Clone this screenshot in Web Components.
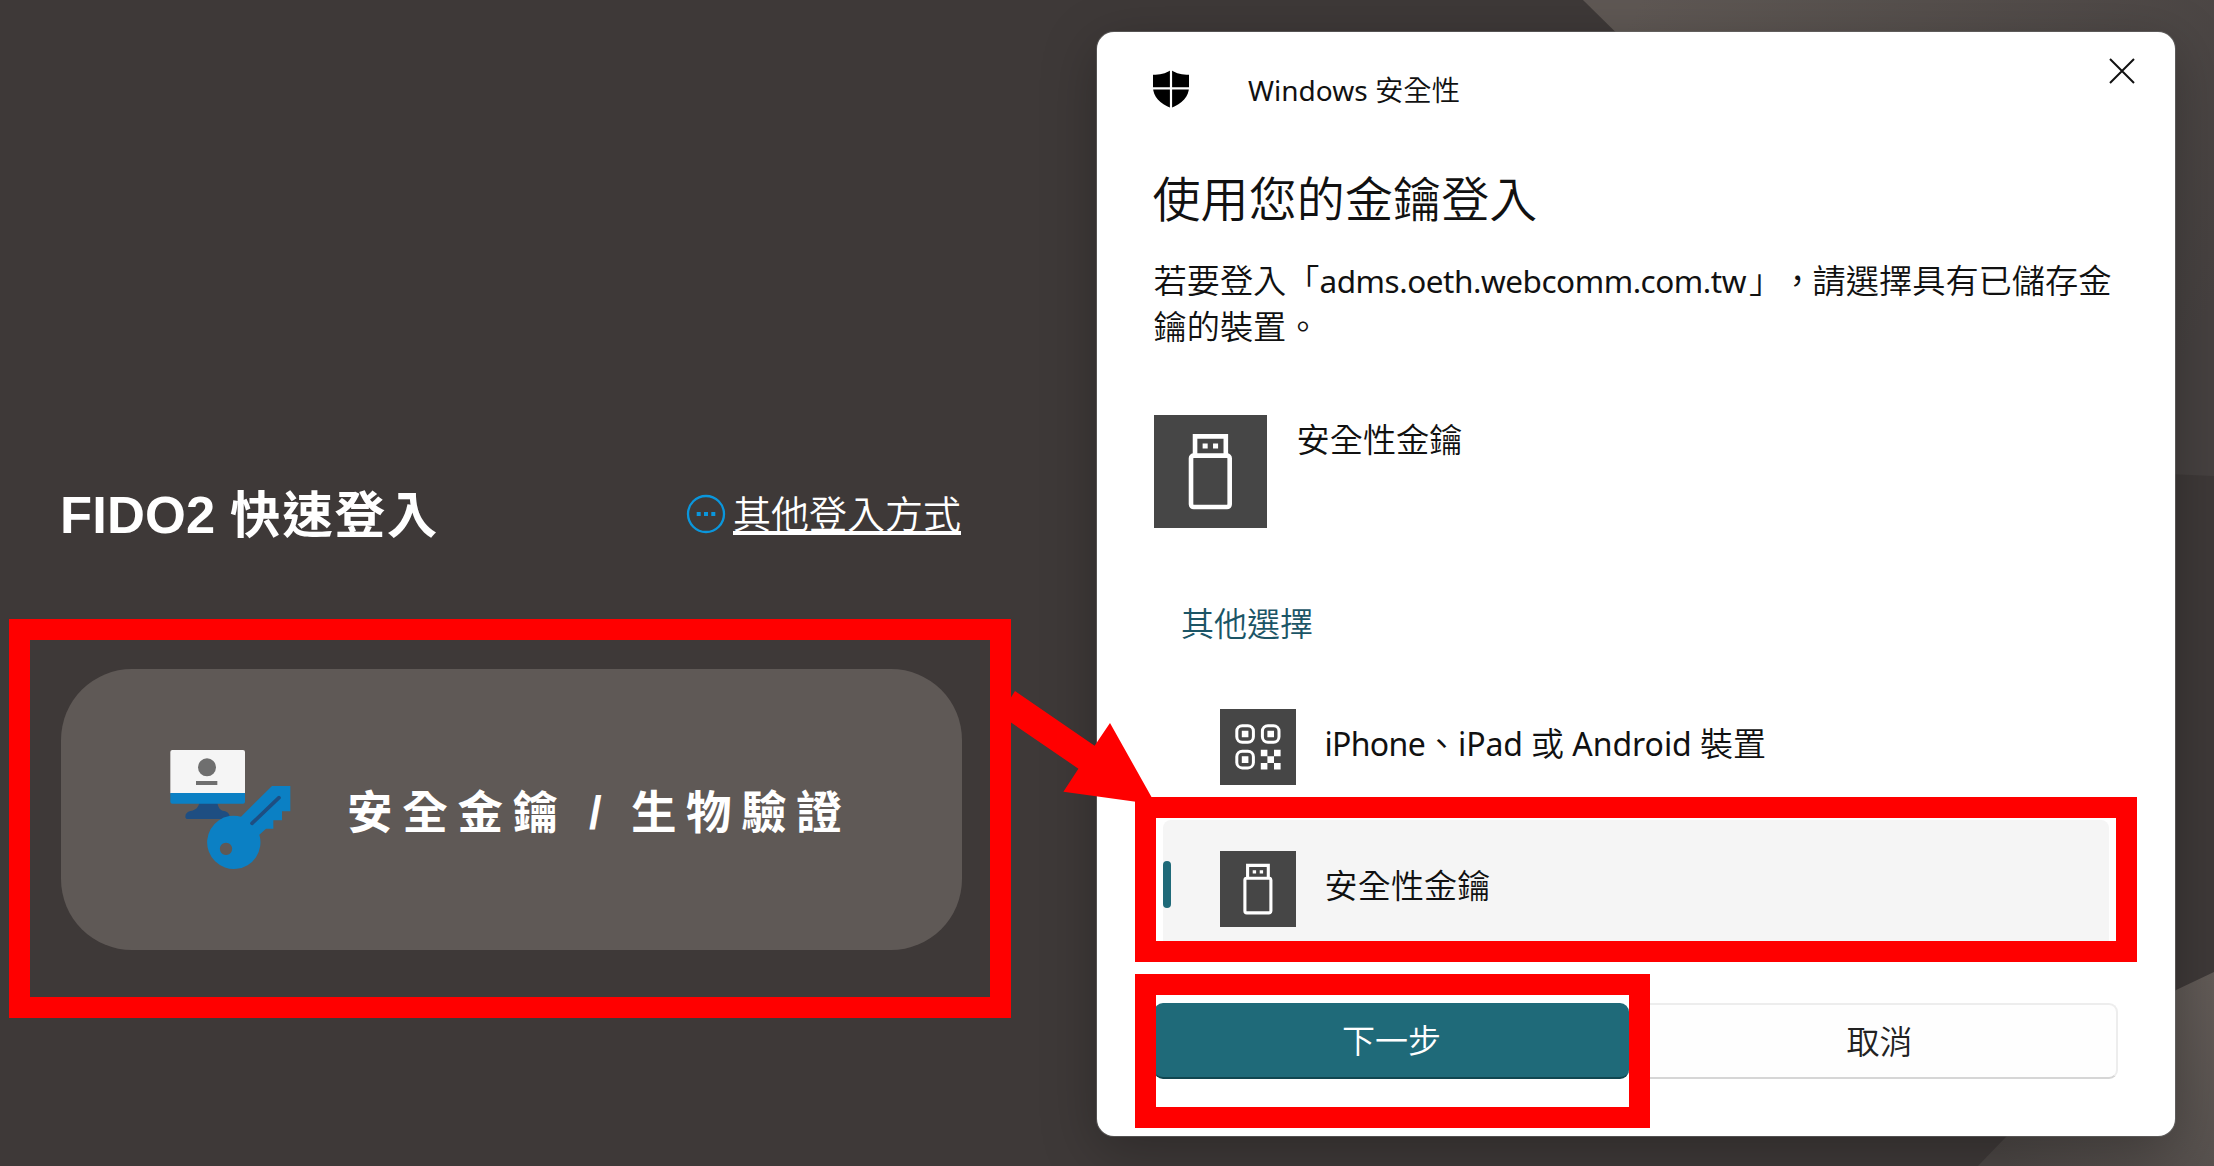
<!DOCTYPE html>
<html lang="zh-Hant">
<head>
<meta charset="utf-8">
<title>FIDO2 快速登入</title>
<style>
html,body{margin:0;padding:0;overflow:hidden}
body{font-family:"Noto Sans CJK TC","Noto Sans",sans-serif;text-spacing-trim:space-all}
</style>
</head>
<body>
<login-page></login-page>
<script>
const define=(name,html,setup)=>customElements.define(name,class extends HTMLElement{
  constructor(){super();this.attachShadow({mode:'open'}).innerHTML=html;}
  connectedCallback(){if(setup)setup(this);}
});

/* A run of text whose tracking is adjusted so that it spans the width in "w". */
define('fit-text',`<style>:host{display:inline-block;line-height:1;white-space:pre;vertical-align:baseline}
:host([latin]){font-family:"Noto Sans",sans-serif;font-weight:400}
:host([arial]){font-family:"Liberation Sans",sans-serif}
</style><slot></slot>`,el=>{
  const w=parseFloat(el.getAttribute('w'));
  const size=el.getAttribute('size');
  if(size)el.style.fontSize=size+'px';
  if(w){
    const r=document.createRange();r.selectNodeContents(el);
    el.style.letterSpacing=((w-r.getBoundingClientRect().width)/el.textContent.length)+'px';
  }
});

define('text-line',`<style>:host{display:flex;align-items:baseline;white-space:pre}</style><slot></slot>`);

define('usb-icon',`<style>:host{display:block}svg{display:block;width:100%;height:100%}</style>
<svg viewBox="0 0 76 76"><rect width="76" height="76" fill="#464646"/>
<g fill="none" stroke="#fff" stroke-width="3.1"><path d="M27.6 27V14.4H48.3V27"/><rect x="24.9" y="27.3" width="26" height="34.6" rx="1.8"/></g>
<path fill="#fff" d="M32.7 19.2h3.4v3.4h-3.4zM39.7 19.2h3.4v3.4h-3.4z"/></svg>`);

define('qr-icon',`<style>:host{display:block}svg{display:block;width:100%;height:100%}</style>
<svg viewBox="0 0 76 76"><rect width="76" height="76" fill="#464646"/>
<g fill="none" stroke="#fff" stroke-width="3"><rect x="16.8" y="16.7" width="16.6" height="16.6" rx="5.5"/><rect x="42.4" y="16.7" width="16.6" height="16.6" rx="5.5"/><rect x="16.8" y="42.3" width="16.6" height="16.6" rx="5.5"/></g>
<path fill="#fff" d="M21.8 21.7h6.6v6.6h-6.6zM47.4 21.7h6.6v6.6h-6.6zM21.8 47.3h6.6v6.6h-6.6zM40.8 40.7h6.6v6.6h-6.6zM54 40.7h6.6v6.6H54zM47.4 47.3H54v6.6h-6.6zM40.8 53.9h6.6v6.6h-6.6zM54 53.9h6.6v6.6H54z"/></svg>`);

define('shield-icon',`<style>:host{display:block;width:36px;height:38px}svg{display:block}</style>
<svg width="36" height="38" viewBox="0 0 36 38"><path d="M18 0C12.500 3.800 6.500 4.600 0 4.800V17C0 26.500 7 34 18 38 29 34 36 26.500 36 17V4.800C29.500 4.600 23.500 3.800 18 0Z"/><path d="M18 0V38M0 18.300H36" stroke="#fff" stroke-width="2.200"/></svg>`);

define('device-key-icon',`<style>:host{display:block;width:124px;height:124px}svg{display:block}</style>
<svg width="124" height="124" viewBox="0 0 372 372">
<path fill="#1e4e82" d="M88 158h54c3 16 9 23 20 25 10 2 17 8 17 17 0 4-3 7-7 7H54c-5 0-8-3-8-7 0-9 6-15 15-17 16-3 24-10 27-25Z"/>
<path fill="#f5f5f5" d="M6 0H219q6 0 6 6V130H1V6Q1 0 7 0Z"/>
<path fill="#0b80c4" d="M1 129H225V155q0 6-6 6H7q-6 0-6-6Z"/>
<circle cx="111" cy="52" r="27" fill="#6f6f6f"/><path d="M78 99H142" stroke="#6f6f6f" stroke-width="12"/>
<path fill="#0b80c4" fill-rule="evenodd" d="M213 200 306 108H361V184H336V211H310V236H288L268 254A80 80 0 1 1 213 200ZM168 278a18.500 18.500 0 1 0 .1 0Z"/>
<path d="M246 220 327 143" stroke="#1e4e82" stroke-width="11" stroke-linecap="round"/></svg>`);

define('more-icon',`<style>:host{display:block;width:40px;height:40px}svg{display:block}</style>
<svg width="40" height="40" viewBox="0 0 40 40"><circle cx="20" cy="20" r="18" fill="none" stroke="#0a96dc" stroke-width="2.300"/><path fill="#0a96dc" d="M10.700 18h4v4h-4zM18 18h4v4h-4zM25.300 18h4v4h-4z"/></svg>`);

define('close-icon',`<style>:host{display:block;width:26px;height:26px}svg{display:block}</style>
<svg width="26" height="26" viewBox="0 0 26 26"><path d="M1 1 25 25M25 1 1 25" stroke="#111" stroke-width="2"/></svg>`);

define('login-card',`<style>
:host{display:flex;align-items:center;box-sizing:border-box;width:901px;height:281px;border-radius:71px;background:#5f5956;padding-left:109px;color:#fff;font-weight:700;font-size:45.500px}
device-key-icon{margin:5px 53px 0 0}
.t{height:60px;line-height:60px;white-space:pre;margin-top:14px}
</style><device-key-icon></device-key-icon><text-line class="t"><fit-text w="221">安全金鑰</fit-text><fit-text arial w="63"> / </fit-text><fit-text w="220.500">生物驗證</fit-text></text-line>`);

define('login-panel',`<style>
:host{display:block;width:901px;padding:484px 0 0 61px;color:#fff}
.head{display:flex;height:60px;margin-bottom:125px;align-items:center;justify-content:space-between}
.title{font-weight:700;margin-left:-1px}
.link{display:flex;align-items:center;gap:7px;margin-right:1px}
.u{display:block;font-size:38px;font-weight:350;border:0;height:42px;line-height:38px;margin-top:-1px;position:relative}
.u::after{content:"";position:absolute;left:0;right:0;bottom:0;height:4px;background:#fff}
.u fit-text{display:block}
</style><div class="head"><text-line class="title"><fit-text arial size="52.500" w="170">FIDO2 </fit-text><fit-text size="50.500" w="209">快速登入</fit-text></text-line>
<div class="link"><more-icon></more-icon><span class="u"><fit-text w="228">其他登入方式</fit-text></span></div></div>
<login-card></login-card>`);

define('option-row',`<style>
:host{display:flex;align-items:center;box-sizing:border-box;height:142px;padding-left:57px;gap:29px;border-radius:8px;position:relative;font-size:33px}
:host([selected]){background:#f5f5f5;height:138px;margin-top:2px}
:host([selected])::before{content:"";position:absolute;left:0;top:41px;width:8px;height:47px;border-radius:4px;background:#1f6a79}
::slotted([slot=icon]){width:76px;height:76px}
.label{margin-bottom:9px}
</style><slot name="icon"></slot><div class="label"><slot></slot></div>`);

define('dialog-button',`<style>
:host{display:flex;align-items:center;justify-content:center;box-sizing:border-box;width:479px;height:76px;border-radius:9px;border:2px solid #ededed;border-bottom-color:#d6d6d6;background:#fefefe;color:#222;font-size:33px;padding:0 0 2px 3px}
:host([primary]){background:#1f6a79;color:#fff;border:0;border-bottom:2px solid #104650;width:475px;padding-left:1px}
</style><slot></slot>`);

define('security-dialog',`<style>
:host{display:flex;flex-direction:column;box-sizing:border-box;width:1078px;height:1104px;background:#fff;border-radius:17px;padding:0 56px 0 57px;box-shadow:0 0 0 1px rgba(110,110,110,.55),0 14px 55px rgba(0,0,0,.27);color:#111;font-weight:350}
.head{display:flex;height:113px;align-items:flex-start}
shield-icon{margin:38px 1px 0 -1px}
.name{margin:43px 0 0 58.500px}
close-icon{margin:26px -16px 0 auto}
h1{font-weight:350;font-size:48px;margin:0 0 0 -1px;height:117px}
h1 fit-text{margin-top:27px}
.msg{display:flex;flex-direction:column;font-size:33.200px;height:153px}
.msg text-line{height:45.500px}
.cred{display:flex;gap:30px;height:113px;font-size:33.200px}
.cred usb-icon{width:113px;height:113px}
.cred fit-text{margin-top:6px}
.more{color:#1b5566;font-size:33px;padding:70px 0 0 27.500px;height:78px}
.list{display:flex;flex-direction:column;margin:0 10px 0 9px}
.foot{display:flex;gap:10px;margin:45px -3px 0 0}
.shift{padding-left:3px}
dialog-button{flex:none}
</style>
<div class="head"><shield-icon></shield-icon><text-line class="name"><fit-text latin size="28" w="127">Windows </fit-text><fit-text size="28.400" w="85">安全性</fit-text></text-line><close-icon></close-icon></div>
<h1><fit-text w="385">使用您的金鑰登入</fit-text></h1>
<div class="msg"><text-line><fit-text w="166">若要登入「</fit-text><fit-text latin size="31.500" w="426.500">adms.oeth.webcomm.com.tw</fit-text><fit-text class="shift" w="63.500">」，</fit-text><fit-text w="299">請選擇具有已儲存金</fit-text></text-line>
<text-line><fit-text w="166">鑰的裝置。</fit-text></text-line></div>
<div class="cred"><usb-icon></usb-icon><fit-text w="166">安全性金鑰</fit-text></div>
<div class="more"><fit-text w="132">其他選擇</fit-text></div>
<div class="list">
<option-row><qr-icon slot="icon"></qr-icon><text-line><fit-text latin size="32" w="100.500">iPhone</fit-text><fit-text w="33">、</fit-text><fit-text latin size="32" w="73">iPad </fit-text><fit-text w="33">或</fit-text><fit-text latin size="32" w="136">&nbsp;Android </fit-text><fit-text w="66">裝置</fit-text></text-line></option-row>
<option-row selected><usb-icon slot="icon"></usb-icon><text-line><fit-text w="166">安全性金鑰</fit-text></text-line></option-row>
</div>
<div class="foot"><dialog-button primary><fit-text w="99">下一步</fit-text></dialog-button><dialog-button><fit-text w="66">取消</fit-text></dialog-button></div>`);

/* Red markers laid over the page content. */
define('mark-box',`<style>:host{display:block;position:absolute;box-sizing:border-box;border:21px solid #f00}</style>`);

define('login-page',`<style>
:host{display:flex;position:relative;width:2214px;height:1166px;background:#3e3938;overflow:hidden}
.bg{position:absolute;inset:0}
login-panel{position:relative;flex:none}
security-dialog{position:relative;flex:none;margin:32px 0 0 134.500px}
.arrow{position:absolute;left:1000px;top:680px}
</style>
<svg class="bg" width="2214" height="1166" viewBox="0 0 2214 1166"><defs>
<linearGradient id="a" x1="1640" y1="0" x2="2214" y2="300" gradientUnits="userSpaceOnUse"><stop offset="0" stop-color="#5f5854"/><stop offset="1" stop-color="#464140"/></linearGradient>
<linearGradient id="b" x1="2214" y1="972" x2="2010" y2="1166" gradientUnits="userSpaceOnUse"><stop offset="0" stop-color="#625b57"/><stop offset="1" stop-color="#4b4644"/></linearGradient></defs>
<path fill="url(#a)" d="M1583 0H2214V476L2060 469Z"/><path fill="url(#b)" d="M2214 972 2174 991 2090 1050 1978 1166H2214Z"/></svg>
<login-panel></login-panel><security-dialog></security-dialog>
<mark-box style="left:9px;top:619px;width:1002px;height:399px"></mark-box>
<mark-box style="left:1135px;top:797px;width:1002px;height:165px"></mark-box>
<mark-box style="left:1135px;top:974px;width:515px;height:154px"></mark-box>
<svg class="arrow" width="170" height="130" viewBox="1000 680 170 130"><path fill="#f00" d="M1015 691 1094.600 745.700 1110 723 1155.700 804.500 1063.400 791.700 1078.400 768.700 1000 715Z"/></svg>`);
</script>
</body>
</html>
